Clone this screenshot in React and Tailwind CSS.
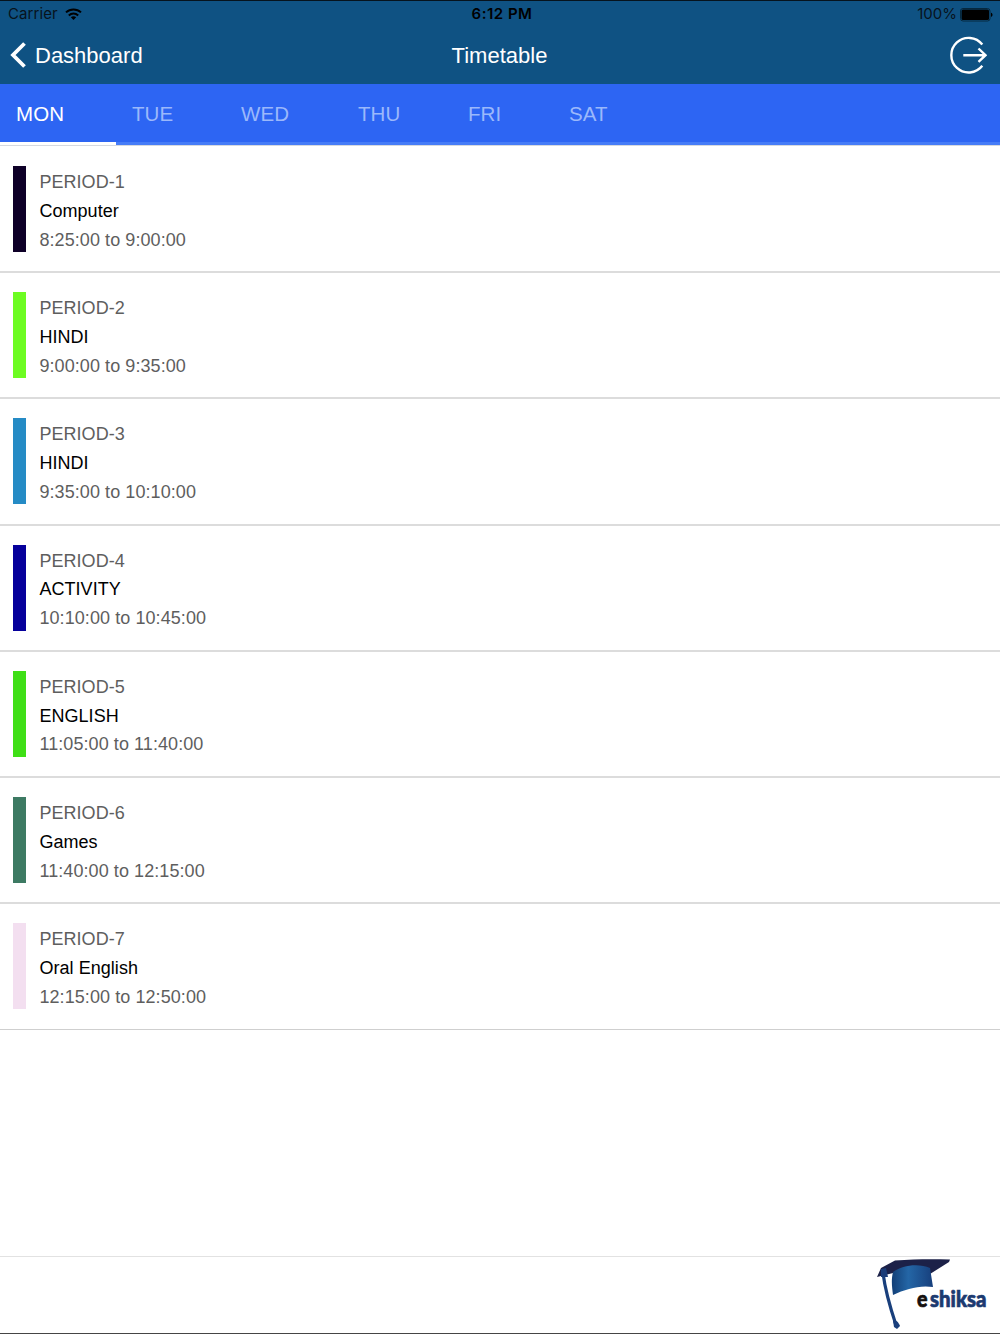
import { useState } from "react";

const days = [
  { name: "MON", width: "w-[116px]" },
  { name: "TUE", width: "w-[109px]" },
  { name: "WED", width: "w-[117px]" },
  { name: "THU", width: "w-[110px]" },
  { name: "FRI", width: "w-[101px]" },
  { name: "SAT", width: "w-[108px]" },
];

const periods = [
  { name: "PERIOD-1", subject: "Computer", time: "8:25:00 to 9:00:00", color: "bg-[#0e0028]" },
  { name: "PERIOD-2", subject: "HINDI", time: "9:00:00 to 9:35:00", color: "bg-[#6dfc22]" },
  { name: "PERIOD-3", subject: "HINDI", time: "9:35:00 to 10:10:00", color: "bg-[#258bc5]" },
  { name: "PERIOD-4", subject: "ACTIVITY", time: "10:10:00 to 10:45:00", color: "bg-[#06009b]" },
  { name: "PERIOD-5", subject: "ENGLISH", time: "11:05:00 to 11:40:00", color: "bg-[#3fdf16]" },
  { name: "PERIOD-6", subject: "Games", time: "11:40:00 to 12:15:00", color: "bg-[#3d7a63]" },
  { name: "PERIOD-7", subject: "Oral English", time: "12:15:00 to 12:50:00", color: "bg-[#f3dff0]" },
];

function StatusBar() {
  return (
    <div className="grid grid-cols-3 items-center h-[27px] pl-2 pr-[7px] font-['Inter',sans-serif] text-[15px] text-[#07131c]">

      <div className="flex items-center gap-[7px]">
        <span className="w-[50px] whitespace-nowrap tracking-[0.1px]">Carrier</span>
        <svg width="17" height="13" viewBox="0 0 17 13" fill="none" stroke="#000" strokeWidth="2">
          <path d="M1 4.4C5.2 0.4 11.8 0.4 16 4.4" />
          <path d="M3.8 7.4C6.5 4.9 10.5 4.9 13.2 7.4" />
          <path d="M5.8 9.3C7.4 7.9 9.6 7.9 11.2 9.3L8.5 12Z" fill="#000" stroke="none" />
        </svg>
      </div>

      <span className="text-center font-semibold tracking-[0.5px] pl-[3px] text-black">6:12 PM</span>

      <div className="flex items-center justify-end gap-[3px]">
        <span>100%</span>
        <svg width="33" height="14" viewBox="0 0 33 14">
          <rect x="0.5" y="0.5" width="29.5" height="12.5" rx="2.5" fill="none" stroke="#06283e" />
          <rect x="1.5" y="1.5" width="27.5" height="10.5" rx="1.5" fill="#000" />
          <path d="M31 4.7C33 5.3 33 8.3 31 8.9Z" fill="#000" />
        </svg>
      </div>

    </div>
  );
}

function Logo() {
  return (
    <svg width="120" height="76" viewBox="0 0 120 76">
      <defs>
        <linearGradient id="cap" x1="0" y1="0" x2="1" y2="0">
          <stop offset="0" stopColor="#123f77" />
          <stop offset="0.4" stopColor="#2466a6" />
          <stop offset="1" stopColor="#173f7c" />
        </linearGradient>
      </defs>
      <path d="M4 19L8 10L22 2.5C42 1 60 1 77 1.5L76 4L57 16L45 12L20 15L8 18Z" fill="#1c2148" />
      <path d="M20 14C29 7 46 5 57 10L60 29C46 27 33 31 20 37C19 29 18 22 20 14Z" fill="url(#cap)" />
      <path d="M10 15C12 31 17 49 23 67" fill="none" stroke="#193f7c" strokeWidth="3.2" />
      <path d="M8 11L13 10L15 19L8 19Z" fill="#1b3c78" />
      <path d="M20 63C23 61 26 65 27 68L24 71L21 69Z" fill="#193f7c" />
      <text x="44" y="49" fontFamily="Lato" fontWeight="900" fontSize="22" textLength="10.5" lengthAdjust="spacingAndGlyphs" fill="#15100f" stroke="#15100f" strokeWidth="0.7">e</text>
      <text x="57" y="49" fontFamily="Lato" fontWeight="900" fontSize="22" textLength="56.5" lengthAdjust="spacingAndGlyphs" fill="#1c3a70" stroke="#1c3a70" strokeWidth="0.7">shiksa</text>
    </svg>
  );
}

function App() {

  const [activeDay, setActiveDay] = useState("MON");

  return (
    <div className="flex flex-col h-[1334px] w-[1000px] bg-white border-t border-b border-t-[#06131d] border-b-[#454545] font-['Liberation_Sans',Arial,sans-serif]">

      {/* header */}
      <header className="h-[83px] shrink-0 bg-[#0f5283]">
        <StatusBar />

        <div className="grid grid-cols-3 items-center h-[54px] pl-[10px] pr-[13px] text-[22px] text-white">
          <button className="flex items-center gap-[9px]">
            <svg width="16" height="26" viewBox="0 0 16 26" fill="none" stroke="white" strokeWidth="3.8">
              <path d="M14.5 1.5L3 13L14.5 24.5" />
            </svg>
            Dashboard
          </button>

          <h1 className="text-center pl-[2px]">Timetable</h1>

          <button className="justify-self-end">
            <svg width="38" height="38" viewBox="0 0 38 38" fill="none" stroke="white" strokeWidth="2.4">
              <path d="M33.3 8.6A17.3 17.3 0 1 0 33.3 29.8" />
              <path d="M14.3 19.2H36.5M29.5 12.5L36.5 19.2L29.5 25.9" />
            </svg>
          </button>
        </div>
      </header>

      {/* day tabs */}
      <nav className="flex h-[62px] shrink-0 bg-[#2d65f3] border-b border-[#d6d9df]">
        {days.map((day) => (
          <button
            key={day.name}
            onClick={() => setActiveDay(day.name)}
            className={`${day.width} pl-4 pt-[3px] text-left text-[20.5px] tracking-[0.1px] border-b-3 ${
              activeDay === day.name ? "text-white border-white" : "text-[#9bb8fb] border-[#467cf7]"
            }`}
          >
            {day.name}
          </button>
        ))}
        <div className="flex-1 border-b-3 border-[#467cf7]"></div>
      </nav>

      {/* periods */}
      <main className="flex-1 pt-px">
        {periods.map((period) => (
          <div key={period.name} className="flex gap-[13px] h-[126.2px] pl-[13px] pt-[19px] border-b-2 last:border-b border-[#dcdcdc] last:border-[#cfcfcf]">
            <div className={`w-[13.4px] h-[86px] ${period.color}`}></div>
            <div className="pt-[2px] text-lg leading-[28.8px] text-[#5e5e5e]">
              <p className="tracking-[0.05px]">{period.name}</p>
              <p className="tracking-[0.05px] text-black">{period.subject}</p>
              <p className="tracking-[0.08px]">{period.time}</p>
            </div>
          </div>
        ))}
      </main>

      <footer className="flex justify-end h-[77px] shrink-0 pr-[7px] pt-px border-t border-[#e2e2e2]">
        <Logo />
      </footer>

    </div>
  );
}

export default App;
